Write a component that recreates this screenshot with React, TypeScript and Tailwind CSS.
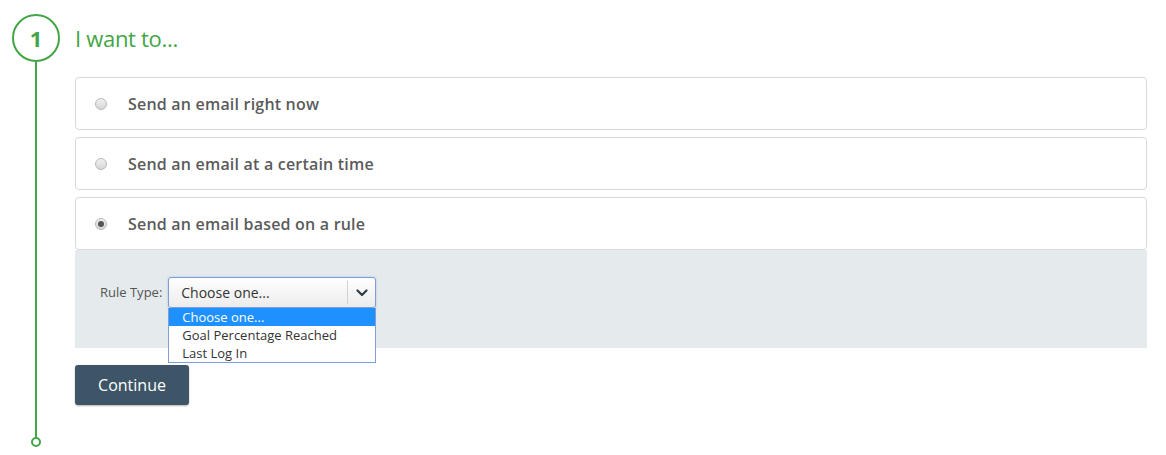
import React, { useState } from 'react';

const options = [
  { id: 'now', label: 'Send an email right now' },
  { id: 'time', label: 'Send an email at a certain time' },
  { id: 'rule', label: 'Send an email based on a rule' }
];

const ruleTypes = ['Choose one...', 'Goal Percentage Reached', 'Last Log In'];

const Radio: React.FC<{ checked: boolean }> = ({ checked }) => (
  <span className="w-[12px] h-[12px] rounded-full border border-[#b9b9b9] bg-gradient-to-b from-[#f1f1f1] to-[#d6d6d6] flex items-center justify-center shrink-0">
    {checked && <span className="w-[6px] h-[6px] rounded-full bg-[#555]"></span>}
  </span>
);

const App: React.FC = () => {
  const [selected, setSelected] = useState('rule');

  return (
    <div className="w-[1166px] h-[455px] bg-white flex font-['Open_Sans',sans-serif] text-[#5a5a5a]">
      {/* Timeline */}
      <div className="ml-[12px] pt-[14px] w-[48px] flex flex-col items-center shrink-0">
        <div className="w-[48px] h-[48px] rounded-full border-2 border-[#43a547] flex items-center justify-center text-[#43a547] text-[22px] font-bold">
          1
        </div>
        <div className="w-[2px] h-[375px] bg-[#43a547]"></div>
        <div className="w-[10px] h-[10px] rounded-full border-2 border-[#43a547]"></div>
      </div>

      {/* Content */}
      <div className="ml-[15px] mr-[19px] flex-1 pt-[14px]">
        <div className="h-[48px] flex items-center">
          <h1 className="text-[22px] text-[#43a547] tracking-[-0.3px]">I want to...</h1>
        </div>

        <div className="mt-[15px] flex flex-col gap-[7px]">
          {options.map((opt) => (
            <button
              key={opt.id}
              onClick={() => setSelected(opt.id)}
              className="h-[53px] border border-[#d5d9dc] rounded-[4px] bg-white flex items-center pl-[19px] text-left"
            >
              <Radio checked={selected === opt.id} />
              <span className="ml-[21px] text-[16px] font-semibold tracking-[0.2px] text-[#5b5b5b]">{opt.label}</span>
            </button>
          ))}
        </div>

        {/* Rule panel */}
        <div className="h-[98px] bg-[#e5eaec] pl-[25px] pt-[27px]">
          <div className="flex items-center text-[13px] text-[#555]">
            <span className="mr-[6px]">Rule Type:</span>
            <div className="relative">
              <div className="w-[208px] h-[31px] border border-[#7b9fd6] rounded-[3px] bg-gradient-to-b from-white to-[#ececec] flex items-center shadow-[0_0_2px_rgba(100,140,220,0.5)]">
                <span className="flex-1 pl-[12px] text-[14px] text-[#333]">Choose one...</span>
                <span className="w-px h-[23px] bg-[#cfd3d6]"></span>
                <span className="w-[27px] flex items-center justify-center">
                  <svg width="12" height="8" viewBox="0 0 12 8" fill="none">
                    <path d="M1.5 1.5 L6 6 L10.5 1.5" stroke="#2f3c46" strokeWidth="2.2" strokeLinecap="round" strokeLinejoin="round" />
                  </svg>
                </span>
              </div>
              <ul className="absolute left-0 top-[31px] w-[208px] bg-white border border-[#7b9fd6] border-t-0 text-[13px] text-[#333] z-10">
                {ruleTypes.map((t, i) => (
                  <li
                    key={t}
                    className={`h-[18px] leading-[18px] pl-[13px] ${i === 0 ? 'bg-[#1e90ff] text-white' : ''}`}
                  >
                    {t}
                  </li>
                ))}
              </ul>
            </div>
          </div>
        </div>

        <button className="mt-[17px] w-[114px] h-[40px] rounded-[3px] bg-[#3d5566] text-white text-[16px] shadow-[0_1px_2px_rgba(0,0,0,0.3)]">
          Continue
        </button>
      </div>
    </div>
  );
};

export default App;
